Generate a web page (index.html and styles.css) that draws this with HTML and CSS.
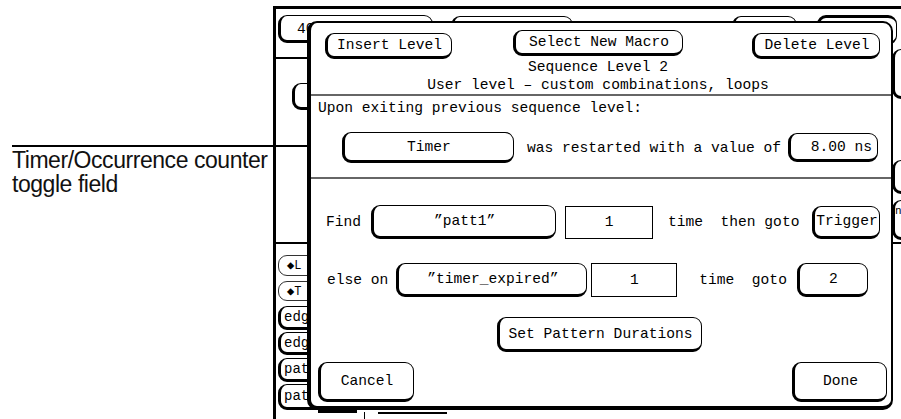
FILE: index.html
```html
<!DOCTYPE html>
<html>
<head>
<meta charset="utf-8">
<link rel="stylesheet" href="styles.css">
</head>
<body>
<div class="page">
  <div class="callout">
    <p class="callout-text">Timer/Occurrence counter<br>toggle field</p>
  </div>
  <div class="screen">
    <div class="topbar">
      <div class="sbtn tb1">40 ns/div</div>
      <div class="sbtn tb2"></div>
      <div class="sbtn tb3"></div>
      <div class="sbtn tb4"></div>
    </div>
    <div class="panel">
      <div class="sbtn pbtn"></div>
      <div class="rightstack">
        <div class="sbtn r1"></div>
        <div class="sbtn r2"></div>
        <div class="sbtn r3">n</div>
      </div>
    </div>
    <div class="lower">
      <div class="sidelist">
        <div class="sbtn side thin s1">◆L</div>
        <div class="sbtn side thin s2">◆T</div>
        <div class="sbtn side s3">edg</div>
        <div class="sbtn side s4">edg</div>
        <div class="sbtn side s5">pat</div>
        <div class="sbtn side s6">pat</div>
      </div>
      <div class="lower-main">
        <div class="strip">
          <div class="fa"></div>
          <div class="fb"></div>
          <div class="fc"></div>
        </div>
      </div>
    </div>
  </div>
  <div class="callout-line"></div>
  <div class="dialog">
    <div class="head">
      <div class="btn btn-insert">Insert Level</div>
      <div class="btn btn-select">Select New Macro</div>
      <div class="btn btn-delete">Delete Level</div>
      <div class="title title1">Sequence Level 2</div>
      <div class="title">User level – custom combinations, loops</div>
    </div>
    <div class="rule"></div>
    <div class="sec1">
      <div class="upon">Upon exiting previous sequence level:</div>
      <div class="timer-row">
        <div class="btn btn-timer">Timer</div>
        <span class="restart">was restarted with a value of</span>
        <div class="btn btn-ns">8.00 ns</div>
      </div>
    </div>
    <div class="rule"></div>
    <div class="sec2">
      <div class="row find-row">
        <span>Find</span>
        <div class="btn btn-patt">”patt1”</div>
        <div class="box box1">1</div>
        <span class="lbl lbl1">time  then goto</span>
        <div class="btn btn-trigger">Trigger</div>
      </div>
      <div class="row else-row">
        <span>else on</span>
        <div class="btn btn-expired">”timer_expired”</div>
        <div class="box box2">1</div>
        <span class="lbl lbl2">time  goto</span>
        <div class="btn btn-two">2</div>
      </div>
      <div class="btn btn-durations">Set Pattern Durations</div>
      <div class="row bottom-row">
        <div class="btn btn-cancel">Cancel</div>
        <div class="btn btn-done">Done</div>
      </div>
    </div>
  </div>
</div>
</body>
</html>
```

FILE: styles.css
```css
* { box-sizing: border-box; }
html, body { margin: 0; padding: 0; background: #fff; }
body { width: 901px; height: 419px; overflow: hidden; }

.page {
  position: relative;
  display: flex;
  width: 901px;
  height: 419px;
  overflow: hidden;
  font-family: "Liberation Mono", "DejaVu Sans Mono", monospace;
  font-size: 14.6px;
  color: #000;
}

/* callout annotation */
.callout { width: 273px; flex-shrink: 0; padding: 148px 0 0 12px; }
.callout-text {
  margin: 0;
  font-family: "Liberation Sans Narrow", "Liberation Sans", sans-serif;
  font-size: 23px;
  letter-spacing: -0.45px;
  line-height: 24px;
  color: #111;
  white-space: nowrap;
}
.callout-line {
  position: absolute;
  left: 12px;
  top: 145px;
  width: 345px;
  height: 2px;
  background: #000;
}

/* background screen */
.screen {
  flex: 1;
  min-width: 0;
  margin-top: 6px;
  border-top: 3px solid #000;
  border-left: 3px solid #000;
  display: flex;
  flex-direction: column;
  overflow: hidden;
}
.sbtn {
  border: 1.5px solid #000;
  border-left-width: 3px;
  border-bottom-width: 3px;
  border-radius: 9px;
  background: #fff;
  white-space: pre;
  overflow: hidden;
  flex-shrink: 0;
}
.topbar { display: flex; align-items: flex-start; height: 48px; padding-top: 6px; flex-shrink: 0; }
.tb1 { margin-left: 2px; width: 155px; height: 28px; padding: 4px 0 0 16px; line-height: 18px; }
.tb2 { margin-left: 18px; width: 122px; height: 28px; margin-top: 1px; }
.tb3 { margin-left: 159px; width: 65px; height: 28px; margin-top: 1px; }
.tb4 { margin-left: 20px; width: 80px; height: 30px; border-top-width: 3px; }

.panel {
  display: flex;
  justify-content: space-between;
  align-items: flex-start;
  height: 187px;
  border-top: 2px solid #000;
  border-bottom: 2px solid #000;
  flex-shrink: 0;
}
.pbtn { margin: 24px 0 0 16px; width: 60px; height: 27px; }
.rightstack { width: 9px; flex-shrink: 0; display: flex; flex-direction: column; }
.rightstack .sbtn { width: 40px; }
.r1 { margin-top: -10px; height: 50px; }
.r2 { margin-top: 61px; height: 34px; }
.r3 { margin-top: 6px; height: 40px; padding: 3px 0 0 0; line-height: 14px; font-size: 11px; }

.lower { display: flex; flex: 1; }
.sidelist { width: 40px; flex-shrink: 0; display: flex; flex-direction: column; padding: 11px 0 0 2px; }
.side { width: 60px; padding-left: 3px; display: flex; align-items: center; font-size: 14px; }
.side.thin { border-width: 1px; border-color: #333; padding-left: 8px; font-size: 12px; }
.s1 { height: 21px; }
.s2 { height: 20px; margin-top: 5px; }
.s3 { height: 24px; margin-top: 5px; }
.s4 { height: 23px; margin-top: 2px; }
.s5 { height: 24px; margin-top: 3px; }
.s6 { height: 26px; margin-top: 2px; }

.lower-main { flex: 1; }
.strip { display: flex; align-items: flex-start; margin-top: 166px; }
.fa { margin-left: 2px; width: 39px; height: 3px; background: #000; }
.fb { margin: 2px 0 0 7px; width: 1px; height: 8px; background: #000; }
.fc { margin: 2px 0 0 13px; width: 69px; height: 2px; background: #000; }

/* dialog */
.dialog {
  position: absolute;
  left: 307px;
  top: 21px;
  width: 586px;
  height: 389px;
  border: 2px solid #000;
  border-left-width: 4px;
  border-bottom-width: 4px;
  border-radius: 10px;
  background: #fff;
  display: flex;
  flex-direction: column;
}
.btn {
  display: flex;
  align-items: center;
  justify-content: center;
  border: 1.5px solid #000;
  border-left-width: 3px;
  border-bottom-width: 3px;
  border-radius: 9px;
  background: #fff;
  white-space: pre;
  flex-shrink: 0;
}
.box {
  display: flex;
  align-items: center;
  justify-content: center;
  border: 1.5px solid #000;
  flex-shrink: 0;
}

.head { display: grid; grid-template-columns: 1fr auto 1fr; padding: 7px 11px 0 14px; }
.btn-insert { justify-self: start; margin-top: 3px; width: 127px; height: 26px; }
.btn-select { width: 170px; height: 26px; margin-right: 9px; }
.btn-delete { justify-self: end; margin-top: 3px; width: 128px; height: 26px; }
.title { grid-column: 1 / -1; text-align: center; line-height: 18px; padding-right: 9px; white-space: pre; }
.title1 { margin-top: -1px; }

.rule { height: 2px; background: #666; flex-shrink: 0; }

.sec1 { height: 81px; padding: 3px 13px 0 7px; flex-shrink: 0; }
.upon { line-height: 18px; }
.timer-row { display: flex; align-items: center; margin-top: 15px; }
.btn-timer { margin-left: 24px; width: 172px; height: 31px; }
.restart { margin-left: 13px; white-space: pre; }
.btn-ns { margin-left: auto; width: 90px; height: 29px; justify-content: flex-end; padding-right: 5px; }

.sec2 { display: flex; flex-direction: column; padding-top: 26px; }
.row { display: flex; align-items: center; height: 34px; white-space: pre; }
.find-row { padding-left: 15px; }
.btn-patt { margin-left: 10px; width: 185px; height: 34px; }
.box1 { margin-left: 9px; width: 88px; height: 33px; }
.lbl1 { margin-left: 15px; }
.btn-trigger { margin-left: auto; margin-right: 11px; width: 68px; height: 33px; }

.else-row { margin-top: 24px; padding-left: 16px; }
.btn-expired { margin-left: 8px; width: 191px; height: 34px; }
.box2 { margin-left: 4px; width: 86px; height: 34px; }
.lbl2 { margin-left: 22px; }
.btn-two { margin-left: auto; margin-right: 23px; width: 71px; height: 34px; }

.btn-durations { margin: 20px 0 0 186px; width: 205px; height: 35px; }
.bottom-row { margin-top: 10px; height: 40px; }
.btn-cancel { margin-left: 7px; width: 96px; height: 40px; }
.btn-done { margin-left: auto; margin-right: 4px; width: 95px; height: 40px; }
```
